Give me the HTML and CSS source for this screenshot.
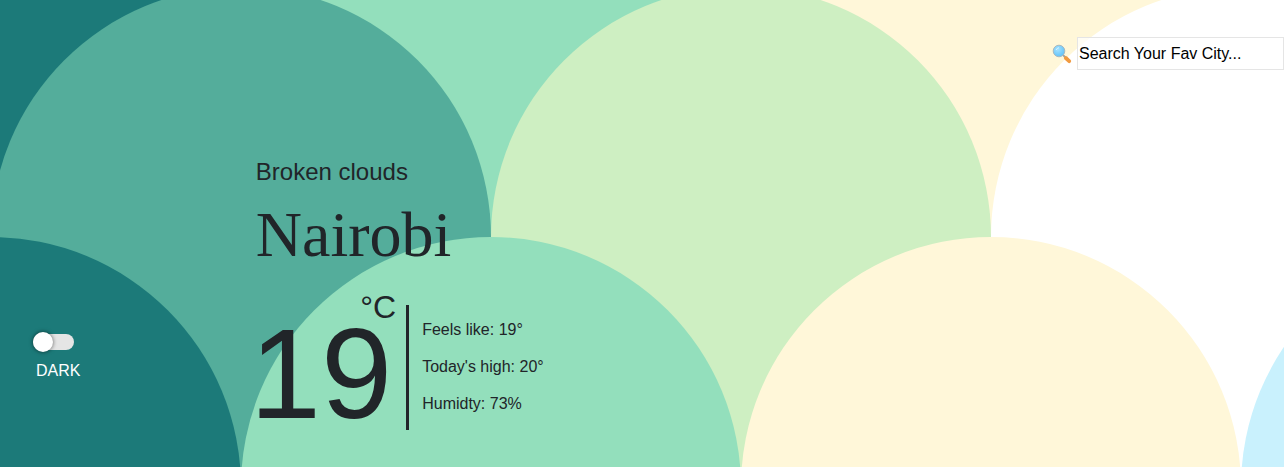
FILE: index.html
```html
<!DOCTYPE html>
<html lang="en">
<head>
<meta charset="utf-8">
<meta name="viewport" content="width=device-width, initial-scale=1">
<title>Weather</title>
<link rel="stylesheet" href="styles.css">
</head>
<body>
<svg class="scales" aria-hidden="true">
  <rect width="241" height="237" fill="#1c7a79"/>
  <rect x="241" width="500" height="237" fill="#93dfbc"/>
  <rect x="741" width="500" height="237" fill="#fff7d9"/>
  <circle cx="241" cy="237" r="250" fill="#54ad9b"/>
  <circle cx="741" cy="237" r="250" fill="#ceefc2"/>
  <circle cx="1241" cy="237" r="250" fill="#ffffff"/>
  <circle cx="-9" cy="487" r="250" fill="#1c7a79"/>
  <circle cx="491" cy="487" r="250" fill="#93dfbc"/>
  <circle cx="991" cy="487" r="250" fill="#fff7d9"/>
  <circle cx="1491" cy="487" r="250" fill="#c9f1fd"/>
</svg>
<div class="page">
  <header class="search">
    <label class="search-label" for="city" aria-label="Search city">
      <svg class="search-icon" viewBox="0 0 20 20" aria-hidden="true">
        <defs>
          <radialGradient id="lens" cx="0.4" cy="0.35" r="0.7">
            <stop offset="0" stop-color="#a5e2ff"/>
            <stop offset="1" stop-color="#5cc0f8"/>
          </radialGradient>
        </defs>
        <path d="M11 11l3 3" stroke="#9aa4a8" stroke-width="1.800"/>
        <path d="M13.800 14l3.400 3.200" stroke="#f19a40" stroke-width="3.800" stroke-linecap="round"/>
        <circle cx="7" cy="7" r="5.800" fill="url(#lens)" stroke="#a9b9bf" stroke-width="1"/>
        <path d="M4 6q1-2 3-2.300" fill="none" stroke="#d9f4ff" stroke-width="1"/>
      </svg>
    </label>
    <input class="search-input" id="city" type="text" placeholder="Search Your Fav City...">
  </header>
  <aside class="theme">
    <input class="switch" id="theme" type="checkbox" role="switch">
    <label class="theme-label" for="theme">DARK</label>
  </aside>
  <main class="weather">
    <p class="condition">Broken clouds</p>
    <h1 class="city">Nairobi</h1>
    <section class="reading">
      <div class="temperature">
        <span class="unit">°C</span>
        <span class="degrees">19</span>
      </div>
      <ul class="details">
        <li>Feels like: 19°</li>
        <li>Today's high: 20°</li>
        <li>Humidty: 73%</li>
      </ul>
    </section>
  </main>
</div>
</body>
</html>
```
FILE: styles.css
```css
* {
  box-sizing: border-box;
}

body {
  margin: 0;
  background: #ffffff;
  color: #212529;
  font: 16px/24px "Liberation Sans", Arial, sans-serif;
}

.scales {
  position: absolute;
  inset: 0;
  z-index: -1;
  width: 100%;
  height: 100%;
  overflow: hidden;
}

.page {
  display: grid;
  grid-template-columns: 20% 1fr;
  align-content: start;
  min-height: 100vh;
}

.search {
  grid-column: 1 / -1;
  display: flex;
  justify-content: flex-end;
  align-items: center;
  gap: 5px;
  padding-top: 37px;
}

.search-label {
  display: flex;
}

.search-icon {
  width: 20px;
  height: 20px;
}

.search-input {
  width: 207px;
  height: 33px;
  padding: 0 1px;
  border: 1px solid #e5e5e5;
  border-radius: 0;
  background: rgba(255, 255, 255, 0.7);
  color: #000000;
  font: inherit;
}

.search-input::placeholder {
  color: #000000;
  opacity: 1;
}

.theme {
  display: flex;
  flex-direction: column;
  align-items: flex-start;
  align-self: end;
  gap: 7px;
  padding: 0 0 47px 33px;
}

.switch {
  appearance: none;
  display: flex;
  align-items: center;
  width: 41px;
  height: 16px;
  margin: 2px 0;
  border-radius: 8px;
  background: #e5e5e5;
  cursor: pointer;
}

.switch::before {
  content: "";
  flex: none;
  width: 20px;
  height: 20px;
  border-radius: 50%;
  background: #ffffff;
  box-shadow: 0 0 4px rgba(0, 0, 0, 0.6);
}

.switch:checked {
  justify-content: flex-end;
}

.theme-label {
  padding-left: 3px;
  color: #ffffff;
}

.weather {
  margin-left: -1px;
  padding-top: 84px;
}

.condition {
  margin: 0 0 5px;
  font-size: 24px;
  line-height: 36px;
}

.city {
  margin: 0 0 16px;
  font: 64px/80px "Liberation Serif", "Times New Roman", serif;
}

.reading {
  display: flex;
  align-items: flex-end;
  gap: 10px;
}

.temperature {
  display: flex;
  flex-direction: column;
  align-items: flex-end;
  margin-left: -6px;
  padding-bottom: 5px;
}

.unit {
  font-size: 32px;
  line-height: 32px;
}

.degrees {
  padding-right: 4px;
  font-size: 128px;
  line-height: 102px;
}

.details {
  display: grid;
  gap: 13px;
  margin: 0;
  padding: 13px 13px 14px;
  border-left: 3px solid #212529;
  list-style: none;
}
```
